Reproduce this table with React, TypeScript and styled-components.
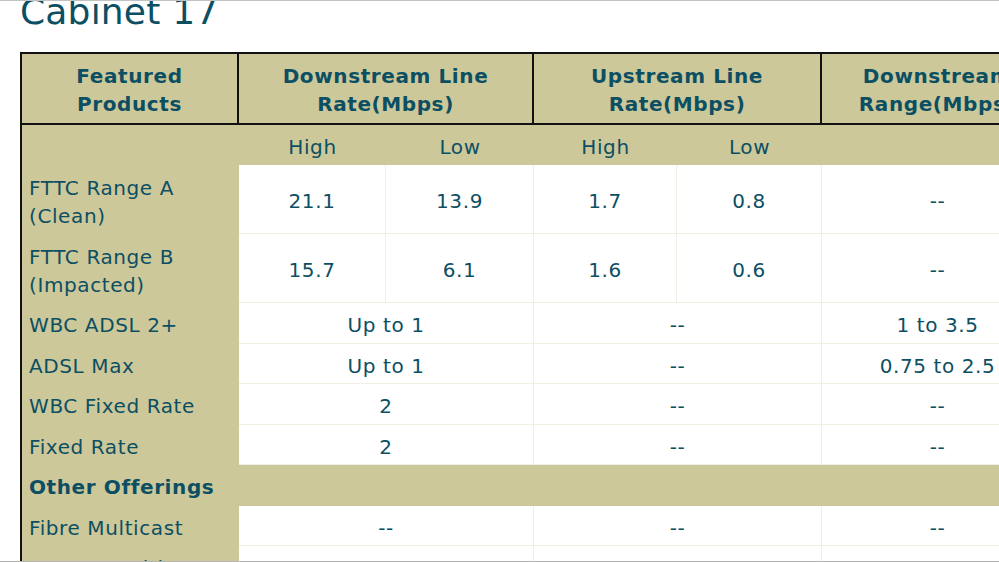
import React from "react";
import styled, { createGlobalStyle } from "styled-components";

const Global = createGlobalStyle`
  html, body { margin: 0; padding: 0; background: #ffffff; overflow: hidden; }
  body { font-family: "DejaVu Sans", Verdana, sans-serif; }
`;

const TEAL = "#0c4f63";
const BEIGE = "#ccc899";
const FAINT = "#f1efe3";

const Frame = styled.div`
  width: 999px;
  height: 562px;
  box-sizing: border-box;
  border-top: 1px solid #c2c2c2;
  border-bottom: 1px solid #b4b4b4;
  overflow: hidden;
  background: #ffffff;
  padding-left: 20px;
`;

const Title = styled.h1`
  margin: -9px 0 0 0;
  font: 400 36px/40px "DejaVu Sans", Verdana, sans-serif;
  letter-spacing: 0.2px;
  color: ${TEAL};
  white-space: nowrap;
`;

const Table = styled.table`
  margin-top: 20px;
  border-collapse: separate;
  border-spacing: 0;
  table-layout: fixed;
  width: 1034px;
  border-left: 2px solid #111;
  border-top: 2px solid #111;
  font-family: "DejaVu Sans", Verdana, sans-serif;
  font-size: 20px;
  line-height: 28px;
  letter-spacing: 0.6px;
  color: ${TEAL};
`;

const HeadCell = styled.th`
  background: ${BEIGE};
  font-weight: 700;
  text-align: center;
  vertical-align: middle;
  padding: 8px 4px 5px;
  border-right: 2px solid #111;
  border-bottom: 2px solid #111;
  white-space: nowrap;
`;

const SubCell = styled.td`
  background: ${BEIGE};
  text-align: center;
  padding: 8px 4px 4px;
  height: 28px;
`;

const Label = styled.td<{ $bold?: boolean; $tall?: boolean }>`
  background: ${BEIGE};
  text-align: left;
  padding: ${(p) => (p.$tall ? "9px 6px 4px 7px" : "8px 6px 4.5px 7px")};
  font-weight: ${(p) => (p.$bold ? 700 : 400)};
  white-space: nowrap;
`;

const Cell = styled.td<{ $tall?: boolean }>`
  background: #ffffff;
  text-align: center;
  vertical-align: middle;
  padding: 8px 4px ${(p) => (p.$tall ? "4px" : "3.5px")};
  border-right: 1px solid ${FAINT};
  border-bottom: 1px solid ${FAINT};
  white-space: nowrap;
`;

const Band = styled.td`
  background: ${BEIGE};
`;

type Row = {
  label: React.ReactNode;
  tall?: boolean;
  cells: { text: string; span: number }[];
};

const rows: Row[] = [
  {
    label: (
      <>
        FTTC Range A
        <br />
        (Clean)
      </>
    ),
    tall: true,
    cells: [
      { text: "21.1", span: 1 },
      { text: "13.9", span: 1 },
      { text: "1.7", span: 1 },
      { text: "0.8", span: 1 },
      { text: "--", span: 1 },
    ],
  },
  {
    label: (
      <>
        FTTC Range B
        <br />
        (Impacted)
      </>
    ),
    tall: true,
    cells: [
      { text: "15.7", span: 1 },
      { text: "6.1", span: 1 },
      { text: "1.6", span: 1 },
      { text: "0.6", span: 1 },
      { text: "--", span: 1 },
    ],
  },
  {
    label: "WBC ADSL 2+",
    cells: [
      { text: "Up to 1", span: 2 },
      { text: "--", span: 2 },
      { text: "1 to 3.5", span: 1 },
    ],
  },
  {
    label: "ADSL Max",
    cells: [
      { text: "Up to 1", span: 2 },
      { text: "--", span: 2 },
      { text: "0.75 to 2.5", span: 1 },
    ],
  },
  {
    label: "WBC Fixed Rate",
    cells: [
      { text: "2", span: 2 },
      { text: "--", span: 2 },
      { text: "--", span: 1 },
    ],
  },
  {
    label: "Fixed Rate",
    cells: [
      { text: "2", span: 2 },
      { text: "--", span: 2 },
      { text: "--", span: 1 },
    ],
  },
];

const other: Row[] = [
  {
    label: "Fibre Multicast",
    cells: [
      { text: "--", span: 2 },
      { text: "--", span: 2 },
      { text: "--", span: 1 },
    ],
  },
  {
    label: "Copper Multicast",
    cells: [
      { text: "--", span: 2 },
      { text: "--", span: 2 },
      { text: "--", span: 1 },
    ],
  },
];

const widths = [217, 147, 148, 143, 145, 232];

function DataRow({ row }: { row: Row }) {
  return (
    <tr>
      <Label $tall={row.tall}>{row.label}</Label>
      {row.cells.map((c, i) => (
        <Cell key={i} colSpan={c.span} $tall={row.tall}>
          {c.text}
        </Cell>
      ))}
    </tr>
  );
}

export default function App() {
  return (
    <>
      <Global />
      <Frame>
        <Title>Cabinet 17</Title>
        <Table>
          <colgroup>
            {widths.map((w, i) => (
              <col key={i} style={{ width: w }} />
            ))}
          </colgroup>
          <thead>
            <tr>
              <HeadCell>
                Featured
                <br />
                Products
              </HeadCell>
              <HeadCell colSpan={2}>
                Downstream Line
                <br />
                Rate(Mbps)
              </HeadCell>
              <HeadCell colSpan={2}>
                Upstream Line
                <br />
                Rate(Mbps)
              </HeadCell>
              <HeadCell>
                Downstream
                <br />
                Range(Mbps)
              </HeadCell>
            </tr>
          </thead>
          <tbody>
            <tr>
              <SubCell />
              <SubCell>High</SubCell>
              <SubCell>Low</SubCell>
              <SubCell>High</SubCell>
              <SubCell>Low</SubCell>
              <SubCell />
            </tr>
            {rows.map((r, i) => (
              <DataRow key={i} row={r} />
            ))}
            <tr>
              <Label $bold>Other Offerings</Label>
              <Band colSpan={5} />
            </tr>
            {other.map((r, i) => (
              <DataRow key={i} row={r} />
            ))}
          </tbody>
        </Table>
      </Frame>
    </>
  );
}
